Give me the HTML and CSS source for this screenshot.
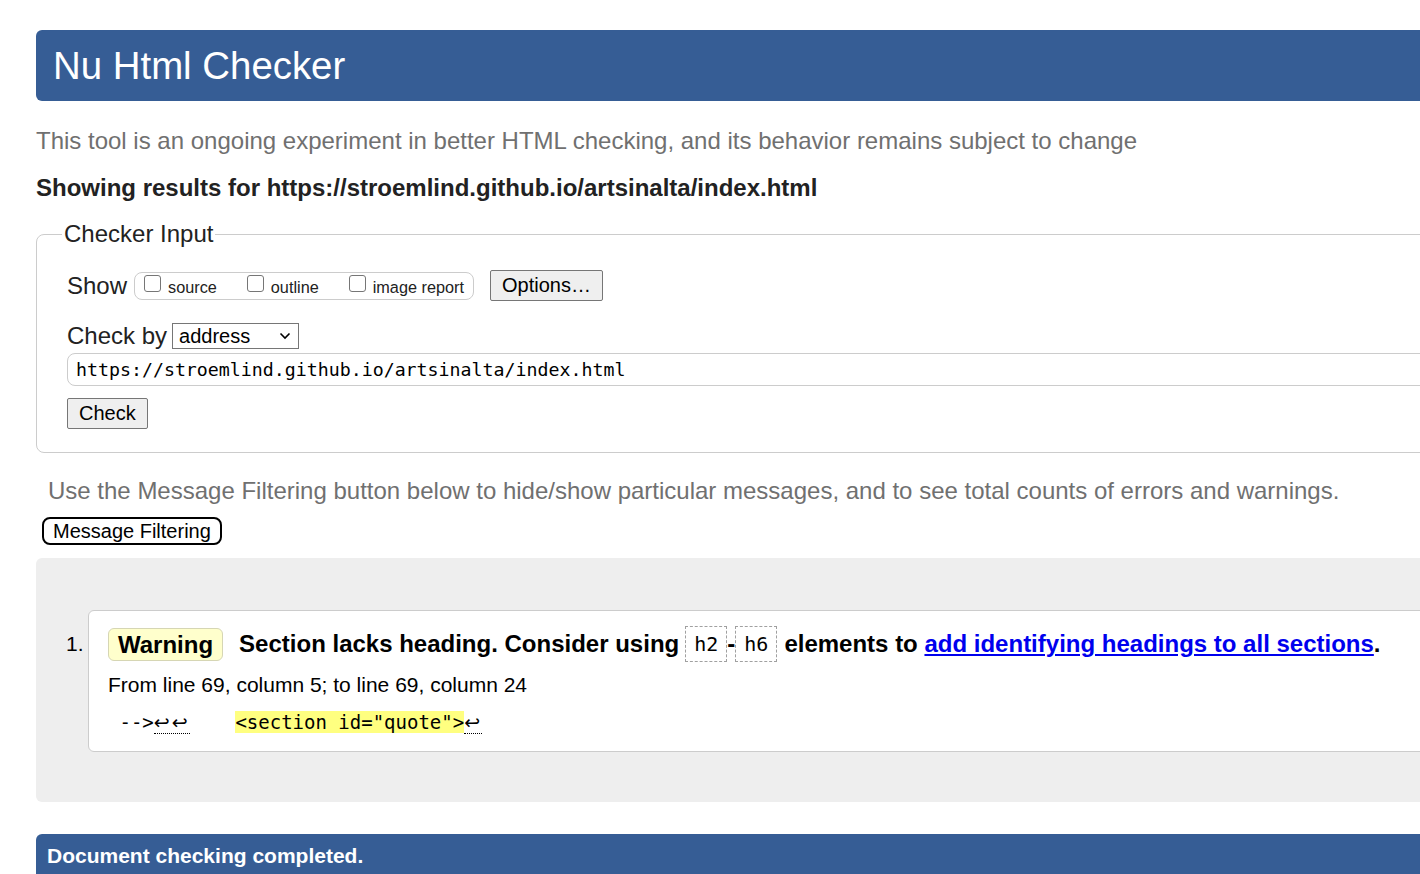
FILE: index.html
```html
<!DOCTYPE html>
<html lang="en">
<head>
<meta charset="utf-8">
<title>Showing results for https://stroemlind.github.io/artsinalta/index.html - Nu Html Checker</title>
<link rel="stylesheet" href="styles.css">
</head>
<body>
<div class="page">
  <h1 class="banner">Nu Html Checker</h1>
  <p class="intro">This tool is an ongoing experiment in better HTML checking, and its behavior remains subject to change</p>
  <p class="results">Showing results for https://stroemlind.github.io/artsinalta/index.html</p>

  <fieldset class="checker">
    <legend>Checker Input</legend>
    <div class="row show-row">
      <span class="label">Show</span>
      <span class="opts">
        <span class="opt"><span class="cb"></span><span class="opt-label">source</span></span>
        <span class="opt"><span class="cb"></span><span class="opt-label">outline</span></span>
        <span class="opt"><span class="cb"></span><span class="opt-label">image report</span></span>
      </span>
      <button class="btn options-btn" type="button">Options…</button>
    </div>
    <div class="row by-row">
      <span class="label">Check by</span>
      <span class="select">
        <span>address</span>
        <svg class="chev" width="12" height="8" viewBox="0 0 12 8"><polyline points="1.5,1.5 6,6 10.5,1.5" fill="none" stroke="#000" stroke-width="1.6"/></svg>
      </span>
    </div>
    <div class="url">https://stroemlind.github.io/artsinalta/index.html</div>
    <button class="btn check-btn" type="button">Check</button>
  </fieldset>

  <p class="filter-note">Use the Message Filtering button below to hide/show particular messages, and to see total counts of errors and warnings.</p>
  <button class="filter-btn" type="button">Message Filtering</button>

  <div class="results-area">
    <span class="num">1.</span>
    <div class="card">
      <div class="msg-line">
        <span class="badge">Warning</span>
        <span>Section lacks heading. Consider using</span>
        <code class="tag tag-first">h2</code>
        <span>-</span>
        <code class="tag tag-last">h6</code>
        <span>elements to&nbsp;</span>
        <a class="msg-link" href="#">add identifying headings to all sections</a>
        <span>.</span>
      </div>
      <p class="location">From line 69, column 5; to line 69, column 24</p>
      <p class="extract"> --&gt;<span class="lf">↩↩</span>    <mark class="hl">&lt;section id="quote"&gt;</mark><span class="lf">↩</span></p>
    </div>
  </div>

  <div class="done">Document checking completed.</div>
</div>
</body>
</html>
```

FILE: styles.css
```css
html, body {
  margin: 0;
  padding: 0;
  overflow: hidden;
  background: #fff;
}

body {
  font-family: "Liberation Sans", Arial, sans-serif;
  color: #222;
}

.page {
  width: 1500px;
  padding: 30px 0 0 36px;
}

.banner {
  margin: 0;
  height: 71px;
  display: flex;
  align-items: center;
  padding-left: 17px;
  background: #365d95;
  color: #fff;
  font-size: 38.4px;
  font-weight: normal;
  border-radius: 6px 0 0 6px;
}

.intro {
  margin: 26px 0 0;
  font-size: 24px;
  line-height: 28px;
  color: #707070;
}

.results {
  margin: 19px 0 0;
  font-size: 24px;
  line-height: 28px;
  font-weight: bold;
}

.checker {
  margin: 19px 0 0;
  padding: 23px 0 23px 30px;
  border: 1px solid #ccc;
  border-radius: 8px 0 0 8px;
  min-width: 0;
}

.checker legend {
  font-size: 24px;
  line-height: 26px;
  padding: 0 2px;
  margin-left: -5px;
}

.row {
  display: flex;
  align-items: center;
}

.show-row {
  height: 31px;
}

.label {
  font-size: 24px;
  line-height: 28px;
}

.opts {
  display: flex;
  align-items: center;
  gap: 30px;
  height: 26px;
  margin-left: 7px;
  padding: 0 9px;
  border: 1px solid #ccc;
  border-radius: 8px;
}

.opt {
  display: flex;
  align-items: center;
  gap: 7px;
}

.cb {
  width: 15px;
  height: 15px;
  border: 1px solid #767676;
  border-radius: 3px;
  background: #fff;
  margin-bottom: 5px;
}

.opt-label {
  font-size: 16.25px;
  line-height: 18px;
  margin-top: 2px;
  color: #222;
}

.btn {
  box-sizing: border-box;
  height: 31px;
  padding: 0 11px;
  font-family: "Liberation Sans", Arial, sans-serif;
  font-size: 20px;
  color: #000;
  background: #efefef;
  border: 1px solid #767676;
  border-radius: 2px;
}

.options-btn {
  margin-left: 16px;
}

.by-row {
  margin-top: 22px;
  height: 26px;
}

.select {
  box-sizing: border-box;
  display: flex;
  align-items: center;
  justify-content: space-between;
  width: 127px;
  height: 26px;
  margin-left: 5px;
  padding: 0 7px 0 6px;
  border: 1px solid #767676;
  background: #fff;
  font-size: 20px;
  color: #000;
}

.url {
  box-sizing: border-box;
  margin-top: 4px;
  height: 33px;
  padding-left: 8px;
  border: 1px solid #ccc;
  border-radius: 8px 0 0 8px;
  font-family: "DejaVu Sans Mono", monospace;
  font-size: 18.25px;
  line-height: 31px;
  color: #000;
}

.check-btn {
  display: block;
  margin-top: 12px;
}

.filter-note {
  margin: 24px 0 0;
  padding-left: 12px;
  font-size: 24px;
  line-height: 28px;
  color: #707070;
}

.filter-btn {
  display: block;
  box-sizing: border-box;
  height: 28px;
  margin: 12px 0 0 6px;
  padding: 0 9px;
  border: 2px solid #000;
  border-radius: 8px;
  background: #fff;
  font-family: "Liberation Sans", Arial, sans-serif;
  font-size: 20px;
  line-height: 24px;
  color: #000;
}

.results-area {
  display: flex;
  align-items: flex-start;
  margin-top: 13px;
  padding: 52px 0 50px 30px;
  background: #eee;
  border-radius: 6px 0 0 6px;
}

.num {
  width: 22px;
  flex: none;
  margin-top: 21px;
  font-size: 21px;
  line-height: 26px;
  color: #000;
}

.card {
  flex: 1;
  min-width: 0;
  padding: 15px 0 17px 19px;
  background: #fff;
  border: 1px solid #ccc;
  border-radius: 6px 0 0 6px;
  color: #000;
}

.msg-line {
  display: flex;
  align-items: center;
  height: 36px;
  font-size: 24px;
  font-weight: bold;
  white-space: nowrap;
}

.badge {
  box-sizing: border-box;
  height: 33px;
  padding: 0 9px;
  margin-right: 16px;
  line-height: 31px;
  background: #ffc;
  border: 1px solid #d6d6b4;
  border-radius: 6px;
}

.tag {
  box-sizing: border-box;
  height: 36px;
  padding: 0 8px;
  line-height: 34px;
  border: 1px dashed #a0a0a0;
  font-family: "DejaVu Sans Mono", monospace;
  font-size: 20px;
  font-weight: normal;
}

.tag-first {
  margin-left: 6px;
}

.tag-last {
  margin-right: 7px;
}

.msg-link {
  color: #0000ee;
  text-decoration: underline;
}

.location {
  margin: 10px 0 0;
  font-size: 21px;
  line-height: 26px;
}

.extract {
  margin: 12px 0 0;
  font-family: "DejaVu Sans Mono", monospace;
  font-size: 19px;
  line-height: 24px;
  white-space: pre;
}

.lf {
  font-family: "DejaVu Sans", sans-serif;
  font-size: 19px;
  letter-spacing: 2px;
  border-bottom: 1px dotted #000;
}

.hl {
  background: #ffff80;
  color: #000;
}

.done {
  margin-top: 32px;
  padding: 10px 11px 20px;
  background: #365d95;
  color: #fff;
  font-size: 21px;
  font-weight: bold;
  line-height: 24px;
  border-radius: 6px 0 0 6px;
}
```
